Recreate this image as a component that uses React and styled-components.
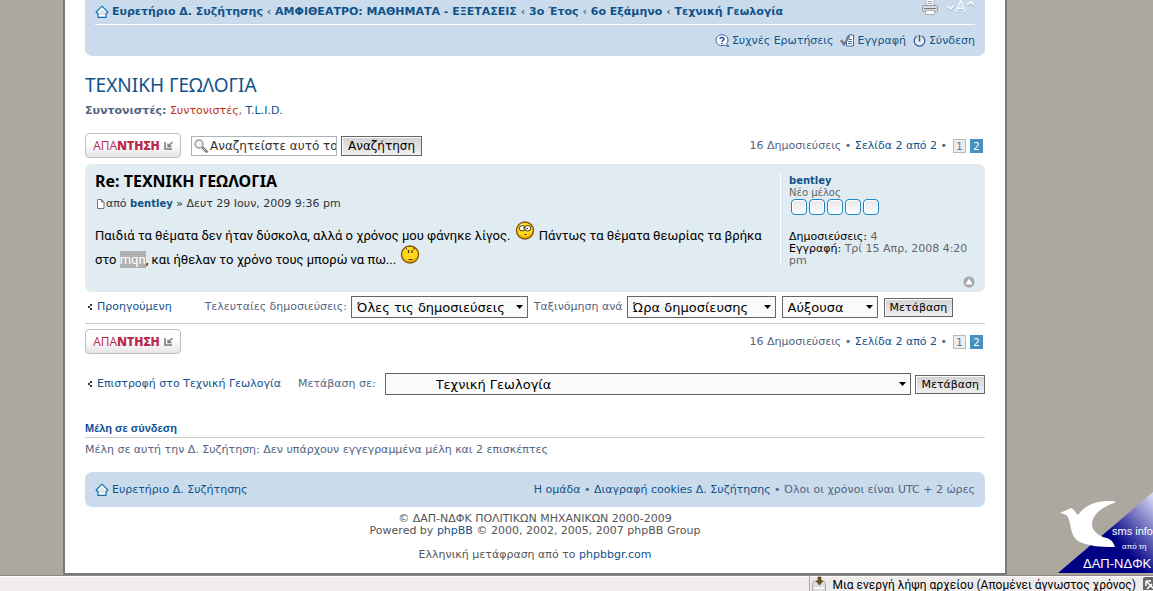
import { useState } from 'react';
import styled, { createGlobalStyle, css } from 'styled-components';

const GlobalStyle = createGlobalStyle`
  * {
    box-sizing: border-box;
  }
  body {
    margin: 0;
    background: #aca8a0;
    color: #536482;
    font-family: "DejaVu Sans", Verdana, sans-serif;
    font-size: 11px;
    line-height: 14px;
  }
  h2, h3, p {
    margin: 0;
  }
  a {
    color: #105289;
    text-decoration: none;
  }
  a:hover {
    text-decoration: underline;
  }
`;

const HomeIcon = () => (
  <svg width="14" height="14" viewBox="0 0 14 14">
    <path d="M7 1.2 12.8 7 12.2 8H11v4.400H3V8H1.400L1.200 7Z" fill="#fff" stroke="#0d70b5" strokeWidth="1.2" strokeLinejoin="round" />
    <path d="M7 4 10 7.2V10H4V7.2Z" fill="#e4e4e4" />
  </svg>
);

const PrintIcon = () => (
  <svg width="16" height="16" viewBox="0 0 16 16">
    <path d="M4 0h8v7H4Z" fill="#fff" stroke="#b5bcc4" />
    <path d="M5.500 2.500h5M5.500 4.500h5" stroke="#9aa7b3" />
    <rect x="0.500" y="6.500" width="15" height="6" rx="1" fill="#dcdcdc" stroke="#92989f" />
    <path d="M2 9.500h12" stroke="#777" />
    <path d="M3.500 11.500h9v4h-9Z" fill="#fff" stroke="#a9b0b8" />
  </svg>
);

const FontSizeIcon = () => (
  <svg width="29" height="16" viewBox="0 0 29 16" fill="none" stroke="#fff">
    <g stroke="#8ba9c6" transform="translate(0 2)">
      <path d="M1.500 6l3 3 3-3M21.500 5l3-3 3 3" strokeWidth="1.400" />
      <path d="M10 12l4.500-11L19 12M12 8.500h5" />
    </g>
    <g transform="translate(0 1)">
      <path d="M1.500 6l3 3 3-3M21.500 5l3-3 3 3" strokeWidth="1.600" />
      <path d="M10 12l4.500-11L19 12M12 8.500h5" strokeWidth="1.300" />
    </g>
  </svg>
);

const FaqIcon = () => (
  <svg width="15" height="14" viewBox="0 0 15 14">
    <path d="M7 .8c3.500 0 6 2.300 6 5.200 0 1.500-.6 2.800-1.500 3.700l2.300 2.800-4.500-1.200c-.7.200-1.500.3-2.300.3-3.500 0-6-2.500-6-5.500S3.500.8 7 .8Z" fill="#fff" stroke="#3858a5" />
    <path d="M4.800 4.800C5 3.300 9 3 9 5c0 1.400-2 1.200-2 2.800M7 8.800v1.500" fill="none" stroke="#24489b" strokeWidth="1.500" />
  </svg>
);

const RegisterIcon = () => (
  <svg width="15" height="14" viewBox="0 0 15 14">
    <path d="M6.500 3.500 9 1h4.500v11h-7Z" fill="#fff" stroke="#3d67b0" />
    <path d="M9 5.500h3M8 7.500h4M8 9.500h4" stroke="#3d67b0" />
    <path d="M1 6l3 4.500L9.500 2" fill="none" stroke="#75797d" strokeWidth="2.300" />
  </svg>
);

const PowerIcon = () => (
  <svg width="13" height="14" viewBox="0 0 13 14">
    <circle cx="6.500" cy="6.800" r="5" fill="#e9eff7" />
    <path d="M4.300 2A5.300 5.300 0 1 0 8.700 2" fill="none" stroke="#3b5aa0" strokeWidth="1.300" />
    <path d="M6.500 1v6.500" stroke="#555" strokeWidth="1.600" />
  </svg>
);

const SearchIcon = () => (
  <svg width="14" height="14" viewBox="0 0 14 14">
    <path d="M8 8l4.500 4.500" stroke="#777" strokeWidth="2.600" strokeLinecap="round" />
    <path d="M8.500 8.500l3.500 3.500" stroke="#ccc" />
    <circle cx="5" cy="5" r="4" fill="#eef3f7" stroke="#999" strokeWidth="1.300" />
  </svg>
);

const PostIcon = () => (
  <svg width="9" height="10" viewBox="0 0 9 10">
    <path d="M1.500.5h4l2.500 2.500v6.500h-6.500Z" fill="#fff" stroke="#777" />
    <path d="M5.500.5v2.500h2.500" fill="none" stroke="#777" />
  </svg>
);

const ReplyArrow = () => (
  <svg width="9" height="9" viewBox="0 0 9 9" fill="none" stroke="#777">
    <path d="M1 1v7h7" strokeWidth="1.500" />
    <path d="M8.500 1 4 5.500M4 2.500v3h3.500" strokeWidth="1.300" />
  </svg>
);

const BackArrow = () => (
  <svg width="5" height="6" viewBox="0 0 5 6" fill="#333">
    <path d="M0 2h2v2H0ZM2 0h2v2H2ZM2 4h2v2H2Z" />
  </svg>
);

const Caret = () => (
  <svg width="7" height="4" viewBox="0 0 7 4">
    <path d="M0 0h7L3.500 4Z" fill="#000" />
  </svg>
);

const TopIcon = () => (
  <svg width="12" height="12" viewBox="0 0 12 12">
    <circle cx="6" cy="6" r="5.500" fill="#a8a8a8" />
    <path d="M6 2.500 9 7v1.500H3V7Z" fill="#fff" />
  </svg>
);

const Smiley = ({ rolling }) => (
  <svg width="20" height="19" viewBox="0 0 20 19">
    <circle cx="10" cy="9.500" r="8.500" fill="#ffd91a" stroke="#80500c" strokeWidth="1.400" />
    <path d="M4 14a8 8 0 0 0 12.500-1" fill="none" stroke="#e5a000" strokeWidth="1.500" />
    <path d="M5 5.500a6 6 0 0 1 3-2.500" fill="none" stroke="#fff7a8" strokeWidth="1.500" />
    {rolling ? (
      <>
        <ellipse cx="7.300" cy="7.300" rx="3" ry="2.700" fill="#fff" stroke="#4a3512" />
        <ellipse cx="12.800" cy="7.300" rx="3" ry="2.700" fill="#fff" stroke="#4a3512" />
        <path d="M8 7h1.500M11.500 7.500H13M9.500 13.500h2" stroke="#332200" strokeWidth="1.200" />
      </>
    ) : (
      <path d="M8.500 5v3M12 5v3M8.500 14.500h4M6 4.500l1-1M13.500 3.500l1 1" stroke="#4a3512" strokeWidth="1.200" />
    )}
  </svg>
);

const DownloadIcon = () => (
  <svg width="16" height="16" viewBox="0 0 16 16">
    <path d="M1.500 7.500 3 5h10l1.500 2.500v8h-13Z" fill="#ddd" stroke="#aaa" />
    <path d="M3 11h10v2H3Z" fill="#f8f8f8" />
    <path d="M7 1h3v4h2l-3.500 4L5 5h2Z" fill="#6b5a1d" stroke="#40350e" strokeWidth=".6" />
  </svg>
);

const CornerIcon = () => (
  <svg width="10" height="14" viewBox="0 0 10 14">
    <rect y="1" width="16" height="16" rx="2" fill="#696969" />
    <path d="M3 5h5M3 5v5M3 5l8 8M4 13l5-5" fill="none" stroke="#fff" strokeWidth="1.500" />
  </svg>
);

const Screen = styled.div`
  position: relative;
  display: flex;
  flex-direction: column;
  min-height: 100vh;
  overflow: hidden;
`;

const Page = styled.main`
  flex: 1;
  margin: 0 146px 0 63px;
  padding: 0 20px 8px;
  background: #fff;
  border: 2px solid #7a7a7a;
  border-top: 0;
`;

const Row = styled.div`
  display: flex;
  align-items: center;
  justify-content: ${({ $between }) => ($between ? 'space-between' : 'flex-start')};
  gap: ${({ $gap }) => $gap || 0}px;
`;

const NavBar = styled.header`
  padding: 0 10px 8px;
  background: #cadceb;
  border-radius: 0 0 7px 7px;
`;

const Crumbs = styled(Row)`
  height: 25px;
  padding-bottom: 1px;
  border-bottom: 1px solid #fff;
  font-weight: bold;
`;

const NavLinks = styled(Row)`
  justify-content: flex-end;
  height: 23px;
  padding-top: 8px;
`;

const IconLink = styled.a`
  display: inline-flex;
  align-items: center;
  gap: ${({ $gap }) => $gap || 0}px;
`;

const PageTools = styled.div`
  display: flex;
  gap: 8px;
  margin-bottom: 6px;
`;

const Title = styled.h2`
  margin-top: 16px;
  color: #105289;
  font-family: "Noto Sans", "Trebuchet MS", sans-serif;
  font-size: 19px;
  font-weight: normal;
  line-height: 26px;
`;

const Moderators = styled.p`
  margin-top: 6px;

  .group {
    color: #bf2f10;
  }
`;

const Actions = styled(Row)`
  height: 25px;
  margin-top: ${({ $top }) => $top}px;
`;

const ReplyButton = styled.a`
  display: flex;
  align-items: center;
  justify-content: center;
  gap: 4px;
  width: 96px;
  height: 25px;
  border: 1px solid #c0bfb5;
  border-radius: 4px;
  background: linear-gradient(#fff, #fff 40%, #e6e6e6);
  color: #bc2a4d;
  font-family: "Open Sans", sans-serif;
  font-size: 12px;

  b {
    font-weight: 800;
  }
`;

const SearchForm = styled.form`
  display: flex;
  align-items: center;
  gap: 4px;
  margin: 0 auto 0 10px;
`;

const SearchBox = styled.label`
  display: flex;
  align-items: center;
  gap: 2px;
  width: 146px;
  height: 20px;
  padding-left: 2px;
  border: 1px solid #a9b4bf;
  background: #fff;

  svg {
    flex: none;
  }
  input {
    min-width: 0;
    flex: 1;
    padding: 0;
    border: 0;
    outline: 0;
    color: #333;
    font: 12px "DejaVu Sans", Verdana, sans-serif;
  }
`;

const Button = styled.button`
  height: ${({ $large }) => ($large ? 20 : 19)}px;
  padding: 0 ${({ $large }) => ($large ? 6 : 5)}px;
  border: 1px solid #666;
  background: linear-gradient(#d2d2d2, #efefef);
  box-shadow: inset 1px 1px #fff;
  color: #000;
  font: ${({ $large }) => ($large ? 12 : 11)}px "DejaVu Sans", Verdana, sans-serif;
  white-space: nowrap;
`;

const Pagination = styled.div`
  display: flex;
  align-items: center;
  gap: 4px;
  padding-right: 2px;
`;

const pageBox = css`
  width: 13px;
  height: 14px;
  border: 1px solid #b4bac0;
  background: #ecedee;
  color: #5c758c;
  font-size: 10px;
  line-height: 13px;
  text-align: center;
`;

const PageLink = styled.a`
  ${pageBox}
  margin-left: 2px;
`;

const CurrentPage = styled.strong`
  ${pageBox}
  border-color: #4692bf;
  background: #4692bf;
  color: #fff;
  font-weight: normal;
`;

const Post = styled.article`
  display: grid;
  grid-template-columns: 1fr 195px;
  margin-top: 6px;
  padding: 9px 10px 4px;
  border-radius: 7px;
  background: #e1ebf2;
`;

const PostBody = styled.div`
  h3 {
    color: #000;
    font: bold 16px/16px "Noto Sans", "Trebuchet MS", sans-serif;
  }
`;

const Username = styled.a`
  font-size: 10px;
  font-weight: bold;
`;

const Byline = styled.p`
  display: flex;
  align-items: center;
  gap: 1px;
  margin-top: 8px;
  padding-left: 1px;
  color: #333;
`;

const Message = styled.p`
  margin-top: 13px;
  color: #000;
  font: 13px/24px Roboto, "Segoe UI", sans-serif;

  svg {
    margin: -6px 1px 0;
    vertical-align: 0;
  }
  mark {
    padding: 1px 0;
    background: #b0b0b0;
    color: #fff;
  }
`;

const Profile = styled.aside`
  height: 92px;
  padding: 2px 0 0 8px;
  border-left: 1px solid #fff;
  color: #666;
  line-height: 12px;

  b {
    color: #000;
    font-weight: normal;
  }
`;

const RankTitle = styled.div`
  font-size: 10px;
`;

const Rank = styled.div`
  display: flex;
  gap: 2px;
  margin: 0 0 16px 2px;

  span {
    width: 16px;
    height: 16px;
    border: 1px solid #1b87c9;
    border-radius: 4px;
    background: linear-gradient(#e6e6e6, #fff);
    box-shadow: inset 0 0 0 1px #fff;
  }
`;

const TopLink = styled.a`
  grid-column: 2;
  justify-self: end;
  height: 12px;
  margin-top: 4px;
`;

const SortRow = styled(Row)`
  padding: 4px 0 5px;
  border-bottom: 1px solid #ccc;
`;

const BackLink = styled.a`
  display: flex;
  align-items: center;
  gap: 4px;
  padding-left: 3px;
  white-space: nowrap;
`;

const Field = styled.label`
  display: flex;
  align-items: center;
  gap: ${({ $gap }) => $gap || 4}px;
  flex: ${({ $grow }) => ($grow ? 1 : 'none')};
  white-space: nowrap;
`;

const SortForm = styled.form`
  display: flex;
  align-items: center;
  gap: 6px;
  margin-left: 33px;
`;

const JumpForm = styled.form`
  display: flex;
  align-items: center;
  flex: 1;
  gap: 4px;
  margin-left: 17px;
`;

const SelectBox = styled.span`
  display: grid;
  align-items: center;
  flex: 1;
  width: ${({ $width }) => ($width ? `${$width}px` : 'auto')};

  select, svg {
    grid-area: 1 / 1;
  }
  svg {
    justify-self: end;
    margin-right: 5px;
    pointer-events: none;
  }
`;

const SelectInput = styled.select`
  appearance: none;
  width: 100%;
  height: 22px;
  padding: 0 16px 0 ${({ $indent }) => $indent || 5}px;
  border: 1px solid #666;
  border-radius: 0;
  background: #fafafa;
  color: #000;
  font: 13px "DejaVu Sans", Verdana, sans-serif;
`;

const JumpRow = styled(Row)`
  margin-top: 19px;
`;

const Online = styled.section`
  margin-top: 25px;

  h3 {
    margin-bottom: 5px;
    padding-bottom: 1px;
    border-bottom: 1px solid #ccc;
    color: #115098;
    font: bold 11px/16px "Liberation Sans", Arial, sans-serif;
  }
`;

const FooterBar = styled(Row)`
  height: 35px;
  margin-top: 15px;
  padding: 0 10px;
  border-radius: 7px;
  background: #cadceb;
`;

const Copyright = styled.footer`
  padding-top: 6px;
  color: #555;
  line-height: 12px;
  text-align: center;

  p + p {
    margin-top: 12px;
  }
`;

const Badge = styled.a`
  position: absolute;
  right: 0;
  bottom: 18px;
  height: 82px;
`;

const StatusBar = styled.div`
  display: flex;
  justify-content: flex-end;
  height: 16px;
  border-top: 1px solid #8c8984;
  background: #f0eceb;
  box-shadow: inset 0 1px #fff;
  color: #000;
  font: 12px/18px Roboto, "Segoe UI", sans-serif;
  overflow: hidden;
`;

const Download = styled.div`
  display: flex;
  gap: 6px;
  padding: 0 7px 0 1px;
  border-left: 1px solid #aaa;
`;

const Select = ({ label, width, indent, options }) => (
  <SelectBox $width={width}>
    <SelectInput aria-label={label} $indent={indent}>
      {options.map((option) => (
        <option key={option}>{option}</option>
      ))}
    </SelectInput>
    <Caret />
  </SelectBox>
);

const TopicActions = ({ top, children }) => (
  <Actions $top={top} $between>
    <ReplyButton href="#reply">
      <span>ΑΠΑ<b>ΝΤΗΣΗ</b></span>
      <ReplyArrow />
    </ReplyButton>
    {children}
    <Pagination>
      <span>16 Δημοσιεύσεις • <a href="#page">Σελίδα 2 από 2</a> •</span>
      <PageLink href="#page1">1</PageLink>
      <CurrentPage>2</CurrentPage>
    </Pagination>
  </Actions>
);

const crumbs = ['ΑΜΦΙΘΕΑΤΡΟ: ΜΑΘΗΜΑΤΑ - ΕΞΕΤΑΣΕΙΣ', '3ο Έτος', '6ο Εξάμηνο', 'Τεχνική Γεωλογία'];

const App = () => {
  const [query, setQuery] = useState('Αναζητείστε αυτό το θέμα…');

  const handleSubmit = (e) => e.preventDefault();

  return (
    <Screen>
      <GlobalStyle />
      <Page>
        <NavBar>
          <Crumbs $between>
            <Row $gap={3}>
              <HomeIcon />
              <span>
                <a href="#index">Ευρετήριο Δ. Συζήτησης</a>
                {crumbs.map((crumb) => (
                  <span key={crumb}> ‹ <a href="#forum">{crumb}</a></span>
                ))}
              </span>
            </Row>
            <PageTools>
              <a href="#print" aria-label="Εκτύπωση"><PrintIcon /></a>
              <a href="#size" aria-label="Μέγεθος γραμματοσειράς"><FontSizeIcon /></a>
            </PageTools>
          </Crumbs>
          <NavLinks $gap={7}>
            <IconLink href="#faq" $gap={2}><FaqIcon />Συχνές Ερωτήσεις</IconLink>
            <IconLink href="#register" $gap={2}><RegisterIcon />Εγγραφή</IconLink>
            <IconLink href="#login" $gap={3}><PowerIcon />Σύνδεση</IconLink>
          </NavLinks>
        </NavBar>

        <Title>ΤΕΧΝΙΚΗ ΓΕΩΛΟΓΙΑ</Title>
        <Moderators>
          <b>Συντονιστές:</b> <a className="group" href="#mods">Συντονιστές</a>, <a href="#tlid">T.L.I.D.</a>
        </Moderators>

        <TopicActions top={15}>
          <SearchForm onSubmit={handleSubmit}>
            <SearchBox>
              <SearchIcon />
              <input aria-label="Αναζήτηση" value={query} onChange={(e) => setQuery(e.target.value)} />
            </SearchBox>
            <Button $large>Αναζήτηση</Button>
          </SearchForm>
        </TopicActions>

        <Post>
          <PostBody>
            <h3>Re: ΤΕΧΝΙΚΗ ΓΕΩΛΟΓΙΑ</h3>
            <Byline>
              <PostIcon />
              <span>από <Username href="#bentley">bentley</Username> » Δευτ 29 Ιουν, 2009 9:36 pm</span>
            </Byline>
            <Message>
              Παιδιά τα θέματα δεν ήταν δύσκολα, αλλά ο χρόνος μου φάνηκε λίγος. <Smiley rolling /> Πάντως τα θέματα θεωρίας τα βρήκα
              <br />
              στο <mark>mqn</mark>, και ήθελαν το χρόνο τους μπορώ να πω... <Smiley />
            </Message>
          </PostBody>
          <Profile>
            <Username href="#bentley">bentley</Username>
            <RankTitle>Νέο μέλος</RankTitle>
            <Rank>
              {[1, 2, 3, 4, 5].map((n) => <span key={n} />)}
            </Rank>
            <div><b>Δημοσιεύσεις:</b> 4</div>
            <div><b>Εγγραφή:</b> Τρί 15 Απρ, 2008 4:20 pm</div>
          </Profile>
          <TopLink href="#top" aria-label="Κορυφή"><TopIcon /></TopLink>
        </Post>

        <SortRow>
          <BackLink href="#previous"><BackArrow />Προηγούμενη</BackLink>
          <SortForm onSubmit={handleSubmit}>
            <Field>
              Τελευταίες δημοσιεύσεις:
              <Select width={177} options={['Όλες τις δημοσιεύσεις']} />
            </Field>
            <Field>
              Ταξινόμηση ανά
              <Select width={149} options={['Ώρα δημοσίευσης']} />
            </Field>
            <Select label="Σειρά" width={96} options={['Αύξουσα', 'Φθίνουσα']} />
            <Button>Μετάβαση</Button>
          </SortForm>
        </SortRow>

        <TopicActions top={5} />

        <JumpRow>
          <BackLink href="#forum"><BackArrow />Επιστροφή στο Τεχνική Γεωλογία</BackLink>
          <JumpForm onSubmit={handleSubmit}>
            <Field $gap={9} $grow>
              Μετάβαση σε:
              <Select indent={50} options={['Τεχνική Γεωλογία']} />
            </Field>
            <Button>Μετάβαση</Button>
          </JumpForm>
        </JumpRow>

        <Online>
          <h3>Μέλη σε σύνδεση</h3>
          <p>Μέλη σε αυτή την Δ. Συζήτηση: Δεν υπάρχουν εγγεγραμμένα μέλη και 2 επισκέπτες</p>
        </Online>

        <FooterBar $between>
          <IconLink href="#index" $gap={3}><HomeIcon />Ευρετήριο Δ. Συζήτησης</IconLink>
          <span>
            <a href="#team">Η ομάδα</a> • <a href="#cookies">Διαγραφή cookies Δ. Συζήτησης</a> • Όλοι οι χρόνοι είναι UTC + 2 ώρες
          </span>
        </FooterBar>
        <Copyright>
          <p>
            © ΔΑΠ-ΝΔΦΚ ΠΟΛΙΤΙΚΩΝ ΜΗΧΑΝΙΚΩΝ 2000-2009<br />
            Powered by <a href="#phpbb">phpBB</a> © 2000, 2002, 2005, 2007 phpBB Group
          </p>
          <p>Ελληνική μετάφραση από το <a href="#phpbbgr">phpbbgr.com</a></p>
        </Copyright>
      </Page>

      <Badge href="#sms">
        <svg width="95" height="82" viewBox="0 0 95 82">
          <defs>
            <linearGradient id="sky" gradientUnits="userSpaceOnUse" x1="60" y1="52" x2="102" y2="14">
              <stop offset="0" stopColor="#000084" />
              <stop offset="1" stopColor="#d5d5f2" />
            </linearGradient>
          </defs>
          <path d="M0 82 95 1V82Z" fill="url(#sky)" />
          <path d="M2 22 13 17C18 19 18 25 21 23 26 15 38 9 53 10 57 10 59 11 56 12 42 17 35 24 34 32 34 39 38 43 45 46 53 48 55 50 57 56 42 56 29 55 20 50 12 44 14 36 10 26 8 23 6 23 2 22Z" fill="#fff" />
          <g fill="#fff" fontFamily="Liberation Sans, Arial, sans-serif">
            <text x="54" y="44" fontSize="11">sms info</text>
            <text x="64" y="58" fontSize="8">από τη</text>
            <text x="25" y="77" fontSize="13">ΔΑΠ-ΝΔΦΚ</text>
          </g>
        </svg>
      </Badge>

      <StatusBar>
        <Download>
          <DownloadIcon />
          <span>Μια ενεργή λήψη αρχείου (Απομένει άγνωστος χρόνος)</span>
        </Download>
        <CornerIcon />
      </StatusBar>
    </Screen>
  );
};

export default App;
